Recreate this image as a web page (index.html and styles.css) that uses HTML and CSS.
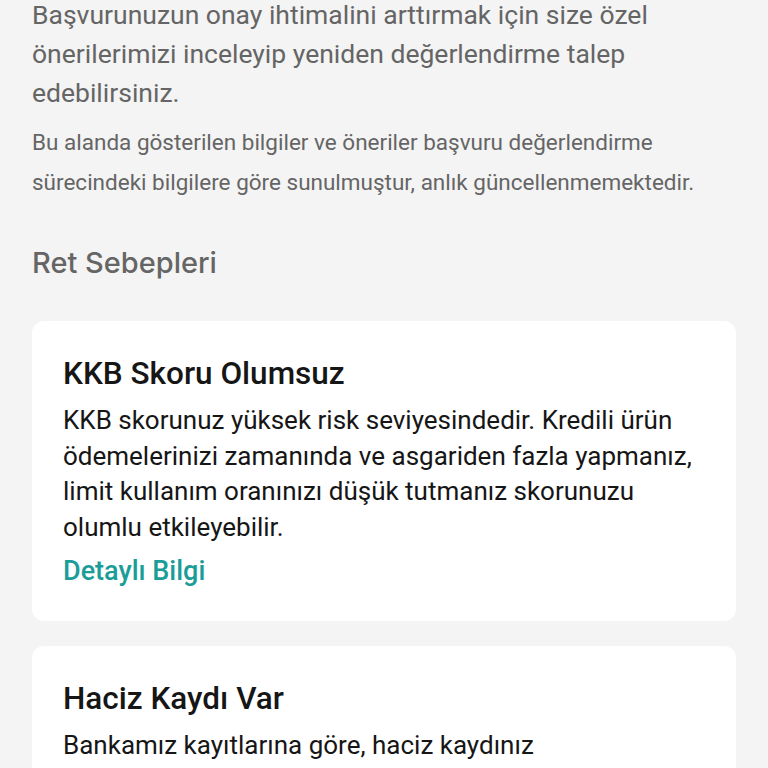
FILE: index.html
```html
<!DOCTYPE html>
<html>
  <head>
    <title>Ret Sebepleri</title>
    <link rel="stylesheet" href="styles.css">
  </head>
  <body>
    <div class="page">
      <p class="intro">Başvurunuzun onay ihtimalini arttırmak için size özel önerilerimizi inceleyip yeniden değerlendirme talep edebilirsiniz.</p>
      <p class="note">Bu alanda gösterilen bilgiler ve öneriler başvuru değerlendirme sürecindeki bilgilere göre sunulmuştur, anlık güncellenmemektedir.</p>

      <h2 class="section-title">Ret Sebepleri</h2>

      <div class="reasons">
        <div class="reason-card">
          <h3>KKB Skoru Olumsuz</h3>
          <p>KKB skorunuz yüksek risk seviyesindedir. Kredili ürün ödemelerinizi zamanında ve asgariden fazla yapmanız, limit kullanım oranınızı düşük tutmanız skorunuzu olumlu etkileyebilir.</p>
          <a href="#" class="detail-link">Detaylı Bilgi</a>
        </div>

        <div class="reason-card">
          <h3>Haciz Kaydı Var</h3>
          <p>Bankamız kayıtlarına göre, haciz kaydınız bulunmaktadır. Haciz kaydınızı kapatmanız değerlendirmeyi olumlu etkileyebilir.</p>
          <a href="#" class="detail-link">Detaylı Bilgi</a>
        </div>
      </div>
    </div>
  </body>
</html>
```

FILE: styles.css
```css
:root {
  --background: #f4f4f4;
  --card: #ffffff;
  --text: #161616;
  --text-light: #656565;
  --teal: #1a9d98;
}

* {
  margin: 0;
  padding: 0;
  box-sizing: border-box;
}

body {
  background: var(--background);
  color: var(--text);
  font-family: Roboto, "Liberation Sans", sans-serif;
}

.page {
  padding: 0 32px 40px;
  margin-top: -5px;
}

.intro {
  font-size: 26.5px;
  line-height: 39px;
  color: var(--text-light);
}

.note {
  font-size: 22.5px;
  line-height: 40px;
  color: var(--text-light);
  margin-top: 10px;
}

.section-title {
  font-family: Inter, sans-serif;
  font-size: 29px;
  font-weight: 500;
  color: var(--text-light);
  margin-top: 43px;
  line-height: 36px;
}

.reasons {
  display: flex;
  flex-direction: column;
  gap: 25px;
  margin-top: 40px;
}

.reason-card {
  background: var(--card);
  border-radius: 12px;
  padding: 35px 24px 34px 31px;
}

.reason-card h3 {
  font-size: 31.5px;
  font-weight: 500;
  line-height: 36px;
}

.reason-card p {
  font-size: 26px;
  line-height: 35.5px;
  margin-top: 11px;
}

.detail-link {
  display: inline-block;
  margin-top: 10px;
  font-size: 27px;
  line-height: 32px;
  font-weight: 500;
  color: var(--teal);
  text-decoration: none;
}
```
